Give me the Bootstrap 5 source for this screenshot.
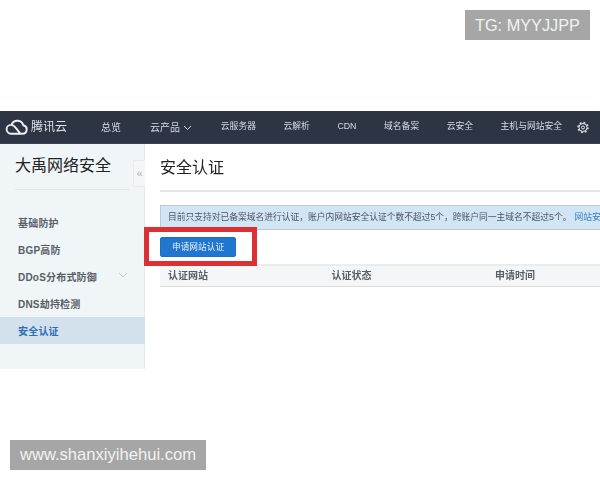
<!DOCTYPE html>
<html lang="zh-CN">
<head>
<meta charset="utf-8">
<title>安全认证</title>
<link rel="stylesheet" href="https://cdn.jsdelivr.net/npm/bootstrap@5.3.0/dist/css/bootstrap.min.css">
<style>
html,body{height:480px;overflow:hidden;background:#fff;}
body{font-family:"Liberation Sans","Noto Sans CJK SC",sans-serif;position:relative;padding-top:111px;color:#333;}
.topbar{height:33px;background:#2d3545;color:#d8dce2;font-size:8.8px;white-space:nowrap;border-bottom:1px solid #3a4150;filter:blur(.3px);}
.brand-mark{width:101px;flex:none;padding-left:5px;}
.brand-name{font-size:12px;color:#dfe3e8;margin-left:3px;}
.tb-nav{gap:27.5px;}
.tb-big{font-size:10px;}
.tb-first{margin-right:1.5px;}
.tb-second{margin-right:1.5px;}
.tb-gear{margin-left:15px;flex:none;}
.shell{height:225px;filter:blur(.3px);}
.sidebar{width:145px;flex:none;background:#f0f5f8;border-right:1px solid #e3e9ee;position:relative;}
.side-title{font-size:16px;line-height:22px;color:#222;margin:11px 15px 0 15px;padding-bottom:12px;border-bottom:1px solid #e2e7ea;width:115px;white-space:nowrap;}
.side-list{margin-top:19px;}
.side-link{height:27px;line-height:29px;padding-left:18px;font-size:10px;font-weight:700;color:#5a5f66;letter-spacing:.2px;position:relative;white-space:nowrap;}
.side-link.current{background:#d3e1ec;color:#2a6fb5;margin-right:-1px;}
.chev{position:absolute;left:118px;top:9px;}
.collapse-tab{position:absolute;right:-1px;top:16px;width:12px;height:27px;background:#f4f7f9;border:1px solid #e6ebef;border-right:0;border-radius:2px 0 0 2px;color:#a9b5c2;font-size:11px;line-height:24px;text-align:center;}
.content{flex:1;min-width:0;padding-left:15px;overflow:hidden;}
.page-title{font-size:16px;line-height:22px;color:#222;margin:13px 0 0;padding-bottom:11px;border-bottom:2px solid #e6e6e6;white-space:nowrap;}
.notice{height:25px;line-height:22px;margin-top:13px;width:470px;background:#d2e5f4;border:1px solid #bcc9d4;padding-left:7px;font-size:8.75px;color:#4b5563;white-space:nowrap;overflow:hidden;}
.notice a{color:#3b82c4;text-decoration:none;margin-left:3px;}
.apply{height:20px;width:76px;margin-top:7px;padding:0;background:#2176cf;border:1px solid #1e6fc0;border-radius:2px;font-size:8.7px;line-height:18px;color:#e8f2fb;display:block;}
.head-row{height:23px;margin-top:7px;background:#f5f6f8;border-top:2px solid #ececec;border-bottom:1px solid #dcdcdc;font-size:10px;font-weight:700;color:#5a5f66;line-height:20px;}
.head-cell{width:163.5px;padding-left:8px;flex:none;}
.redbox{position:absolute;left:144px;top:227px;width:113px;height:39px;border:5px solid #dc3035;}
.mark-tag{position:absolute;background:#a6a6a6;color:#f2f2f2;height:30px;line-height:30px;text-align:center;font-family:"Liberation Sans",sans-serif;}
.mark-a{left:465px;top:10px;width:125px;font-size:16.3px;}
.mark-b{left:10px;top:440px;width:196px;font-size:16.6px;}
</style>
</head>
<body>
<header class="topbar d-flex align-items-center">
  <div class="brand-mark d-flex align-items-center">
    <svg width="23" height="16" viewBox="0 0 23 16" fill="none" stroke="#eef0f3" stroke-width="1.9"><path d="M6 14.700h11.500a4.300 4.300 0 0 0 .8-8.500A6.200 6.200 0 0 0 6.700 5.300 M6 14.700a4.400 4.400 0 1 1 0-8.800c2.700 0 4.200 2.200 5.800 4.200l3.500 4.600"/></svg>
    <span class="brand-name">腾讯云</span>
  </div>
  <nav class="tb-nav d-flex align-items-center">
    <span class="tb-big tb-first">总览</span>
    <span class="tb-big tb-second">云产品 <svg width="9" height="6" viewBox="0 0 9 6" fill="none" stroke="#d8dce2" stroke-width="1"><path d="M1 1l3.500 3.500L8 1"/></svg></span>
    <span>云服务器</span>
    <span>云解析</span>
    <span>CDN</span>
    <span>域名备案</span>
    <span>云安全</span>
    <span>主机与网站安全</span>
  </nav>
  <svg class="tb-gear" width="12" height="13" viewBox="0 0 12 13" fill="none" stroke="#e2e5ea"><circle cx="6" cy="6.500" r="4" stroke-width="1"/><circle cx="6" cy="6.500" r="5" stroke-width="1.400" stroke-dasharray="1.900 2"/><circle cx="6" cy="6.500" r="1.500" stroke-width="1"/></svg>
</header>
<div class="shell d-flex">
  <aside class="sidebar">
    <div class="side-title">大禹网络安全</div>
    <div class="collapse-tab">«</div>
    <div class="side-list">
      <div class="side-link">基础防护</div>
      <div class="side-link">BGP高防</div>
      <div class="side-link">DDoS分布式防御<svg class="chev" width="10" height="7" viewBox="0 0 10 7" fill="none" stroke="#c5ccd3" stroke-width="1"><path d="M1 1l4 4 4-4"/></svg></div>
      <div class="side-link">DNS劫持检测</div>
      <div class="side-link current">安全认证</div>
    </div>
  </aside>
  <main class="content">
    <h1 class="page-title fw-normal">安全认证</h1>
    <div class="notice">目前只支持对已备案域名进行认证，账户内网站安全认证个数不超过5个，跨账户同一主域名不超过5个。<a href="#">网站安全认证</a></div>
    <button type="button" class="btn apply">申请网站认证</button>
    <div class="head-row d-flex">
      <div class="head-cell">认证网站</div>
      <div class="head-cell">认证状态</div>
      <div class="head-cell">申请时间</div>
    </div>
  </main>
</div>
<div class="redbox"></div>
<div class="mark-tag mark-a">TG: MYYJJPP</div>
<div class="mark-tag mark-b">www.shanxiyihehui.com</div>
<script src="https://cdn.jsdelivr.net/npm/bootstrap@5.3.0/dist/js/bootstrap.bundle.min.js"></script>
</body>
</html>
